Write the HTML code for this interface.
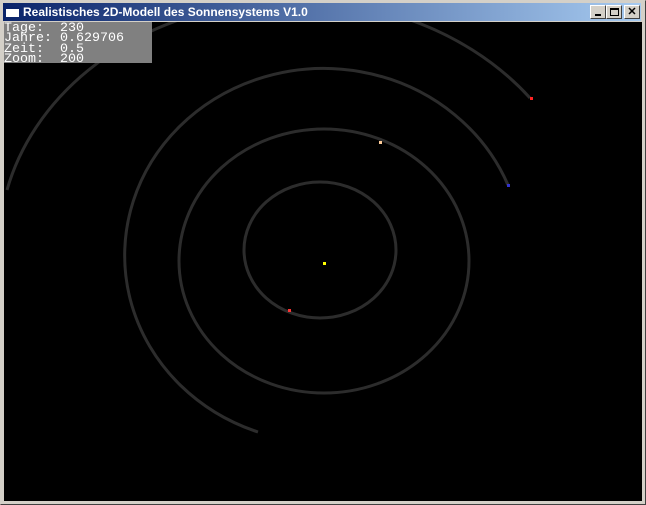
<!DOCTYPE html>
<html><head><style>
body{margin:0;width:646px;height:505px;background:#d4d0c8;position:relative;overflow:hidden;font-family:"Liberation Sans",sans-serif}
.win{position:absolute;left:0;top:0;width:644px;height:503px;border:1px solid;border-color:#d4d0c8 #404040 #404040 #d4d0c8}
.title{position:absolute;left:3px;top:3px;width:638px;height:18px;background:linear-gradient(to right,#0a246a,#a6caf0)}
.title span{position:absolute;left:20px;top:2px;color:#fff;font-weight:bold;font-size:12px}
.ico{position:absolute;left:3px;top:4px;width:13px;height:10px;background:#fff;border-top:2px solid #0a246a;box-sizing:border-box}
.btn{position:absolute;top:2px;width:16px;height:14px;background:#d4d0c8;box-sizing:border-box;border:1px solid;border-color:#fff #404040 #404040 #fff;font-size:11px;font-weight:bold;text-align:center;line-height:12px}
.client{position:absolute;left:4px;top:22px;width:638px;height:479px;background:#000;overflow:hidden}
.info{position:absolute;left:0;top:0;width:148px;height:41px;background:#808080;color:#fff;font-family:"Liberation Mono",monospace;font-size:13.33px;line-height:10.3px;white-space:pre;overflow:hidden}
.info div{position:relative;top:2px}
</style></head><body>
<div class="win"></div>
<div class="title"><div class="ico"></div><span>Realistisches 2D-Modell des Sonnensystems V1.0</span>
<div class="btn" style="left:587px"><div style="position:absolute;left:4px;top:8px;width:6px;height:2px;background:#000"></div></div>
<div class="btn" style="left:603px"><div style="position:absolute;left:3px;top:2px;width:9px;height:8px;border:1px solid #000;border-top-width:2px;box-sizing:border-box"></div></div>
<div class="btn" style="left:621px">✕</div>
</div>
<div class="client">
<svg width="638" height="479" style="position:absolute;left:0;top:0">
<g transform="translate(-4,-22)" fill="none" stroke="#2c2c2c" stroke-width="3">
<ellipse cx="320" cy="250" rx="76" ry="68"/>
<ellipse cx="324" cy="261" rx="145" ry="132"/>
<path d="M258,432 A199,187 0 1,1 508,185"/>
<path d="M7,190 A295.5,247 0 0,1 530,98"/>
</g>
<g transform="translate(-4,-22)">
<rect x="323" y="262" width="3" height="3" fill="#ff0"/>
<rect x="288" y="309" width="3" height="3" fill="#f33"/>
<rect x="379" y="141" width="3" height="3" fill="#fc9"/>
<rect x="507" y="184" width="3" height="3" fill="#33c"/>
<rect x="530" y="97" width="3" height="3" fill="#f22"/>
</g>
</svg>
<div class="info"><div>Tage:  230
Jahre: 0.629706
Zeit:  0.5
Zoom:  200</div></div>
</div>
</body></html>
